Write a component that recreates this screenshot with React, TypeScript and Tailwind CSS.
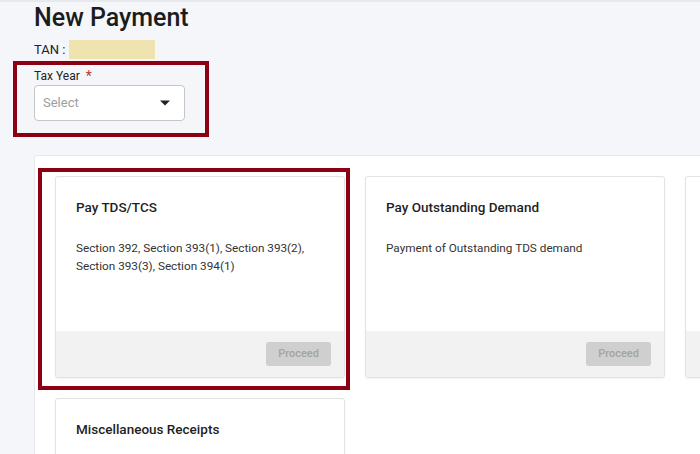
import React from 'react'

interface PaymentCard {
  title: string
  description?: string[]
  // whether the footer button falls inside the visible window
  showButton?: boolean
}

const cards: PaymentCard[] = [
  { title: 'Pay TDS/TCS', description: ['Section 392, Section 393(1), Section 393(2),', 'Section 393(3), Section 394(1)'], showButton: true },
  { title: 'Pay Outstanding Demand', description: ['Payment of Outstanding TDS demand'], showButton: true },
  // third card is cut off by the window edge, only its border shows
  { title: '', description: [] },
  { title: 'Miscellaneous Receipts', description: [] },
]

function Card({ card }: { card: PaymentCard }) {
  return (
    <div className="flex h-[202px] flex-col overflow-hidden rounded-[3px] border border-[#e3e3e3] bg-white shadow-[0_1px_2px_rgba(0,0,0,0.06)]">
      <div className="flex-1 px-[20px] pt-[20px]">
        <h3 className="h-[20px] text-[13.5px] font-medium leading-[20px] text-[#1f1f1f]">{card.title}</h3>
        <div className="mt-[22px] text-[11.75px] leading-[18px] text-[#333]">
          {card.description?.map((line, i) => (
            <p key={i}>{line}</p>
          ))}
        </div>
      </div>
      <div className="flex h-[46px] items-center justify-end bg-[#f2f2f2] pr-[13px]">
        {card.showButton && (
          <button
            type="button"
            disabled
            className="h-[24px] w-[65px] rounded-[3px] bg-[#cfcfcf] text-[11px] font-medium text-[#a3a3a3]"
          >
            Proceed
          </button>
        )}
      </div>
    </div>
  )
}

export default function App() {
  return (
    <div className="relative h-[454px] w-[700px] overflow-hidden border-t-2 border-[#e8e9ed] bg-[#f5f6fa] font-['Roboto','Liberation_Sans',sans-serif]">
      <div className="pl-[34px]">
        <h1 className="pt-[1px] text-[25px] font-medium leading-[30px] text-[#1c1c1c]">New Payment</h1>

        <div className="mt-[7px] flex h-[19px] items-center gap-[4px] text-[13px] text-[#222]">
          <span>TAN :</span>
          <span className="h-[19px] w-[86px] bg-[#efe3b0]" />
        </div>

        {/* Tax year select */}
        <div className="mt-[9px]">
          <label className="flex items-center gap-[6px] text-[12px] leading-[16px] text-[#222]">
            Tax Year <span className="text-[14px] text-[#c0392b]">*</span>
          </label>
          <div className="mt-[1px] flex h-[36px] w-[151px] items-center justify-between rounded-[4px] border border-[#c6c6c6] bg-white pl-[8px] pr-[14px]">
            <span className="text-[13px] text-[#9e9e9e]">Select</span>
            <svg width="10" height="6" viewBox="0 0 10 5">
              <path d="M0 0h10L5 5z" fill="#222" />
            </svg>
          </div>
        </div>

        {/* Payment options panel */}
        <div className="mt-[34px] w-[700px] rounded-tl-[3px] border border-[#e6e8ec] bg-white pl-[20px] pt-[20px]">
          <div className="grid grid-cols-[290px_300px_300px] gap-x-[20px] gap-y-[20px]">
            {cards.map((card, i) => (
              <Card key={i} card={card} />
            ))}
          </div>
        </div>
      </div>

      {/* Highlight annotations */}
      <div className="pointer-events-none absolute left-[13px] top-[59px] h-[76px] w-[196px] border-4 border-[#8b0012]" />
      <div className="pointer-events-none absolute left-[38px] top-[166px] h-[222px] w-[312px] border-4 border-[#8b0012]" />
    </div>
  )
}
